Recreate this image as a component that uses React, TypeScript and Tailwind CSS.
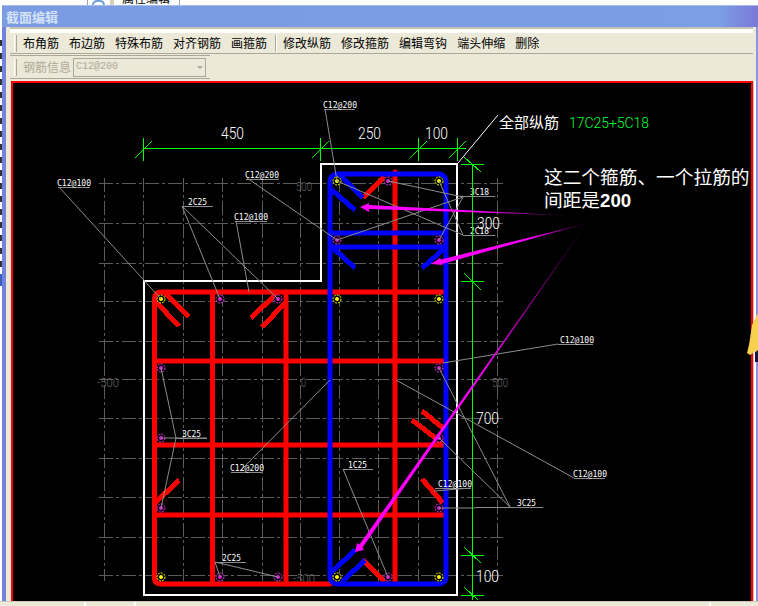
import React from "react";

const cad = "'Liberation Sans', 'Noto Sans CJK SC', sans-serif";

const toolsA = ["布角筋", "布边筋", "特殊布筋", "对齐钢筋", "画箍筋"];
const toolsB = ["修改纵筋", "修改箍筋", "编辑弯钩", "端头伸缩", "删除"];

const gridX = [104.5, 143.5, 183, 222, 262, 300.5, 339, 378, 418, 457, 497];
const gridY = [183, 223, 263, 301, 341, 379, 418, 458, 497, 537, 575];

const yellowBars = [[161, 299], [337, 181], [439, 181], [337, 299], [439, 299], [161, 577], [337, 577], [439, 577]];
const pinkBars = [
  [220, 299], [278, 299], [388, 181], [337, 240], [439, 240], [161, 368], [161, 438], [161, 508],
  [439, 368], [439, 438], [439, 508], [220, 577], [388, 577], [278, 577],
];

// red hooks and blue hooks as x1 y1 x2 y2
const redHooks = [
  [165, 293, 189, 317], [155, 301, 179, 326], [277, 293, 251, 318], [286, 302, 262, 327],
  [153, 505, 179, 480], [443, 428, 422, 411], [442, 443, 412, 420], [443, 503, 422, 479],
  [384, 177, 363, 198], [363, 560, 385, 582],
];
const blueHooks = [
  [340, 175, 363, 198], [332, 190, 355, 210], [333, 248, 355, 268], [445, 248, 422, 268],
  [332, 572, 355, 550], [342, 582, 365, 560],
];

const leaders = [
  [59, 187, 161, 299], [182, 206, 220, 299], [182, 206, 278, 299], [236, 221, 249, 292],
  [247, 178, 337, 240], [325, 109, 337, 181], [388, 181, 463, 197], [337, 240, 463, 197],
  [337, 181, 463, 235], [439, 181, 463, 235], [439, 240, 463, 197], [558, 344, 443, 363],
  [510, 507, 439, 368], [510, 507, 439, 438], [439, 508, 475, 508], [574, 478, 396, 380],
  [434, 491, 471, 488], [343, 469, 388, 577], [240, 471, 330, 380], [176, 438, 161, 368],
  [176, 438, 161, 508], [161, 438, 207, 438], [215, 562, 220, 577], [215, 562, 278, 577],
];

// label text, text x, text baseline, underline x1, underline x2
const labels: [string, number, number, number, number][] = [
  ["C12@100", 57, 186, 58, 90],
  ["2C25", 188, 205, 182, 213],
  ["C12@100", 234, 220, 235, 267],
  ["C12@200", 245, 178, 246, 279],
  ["C12@200", 323, 108, 324, 355],
  ["3C18", 470, 195, 461, 495],
  ["2C18", 470, 234, 463, 495],
  ["C12@100", 560, 343, 558, 593],
  ["3C25", 517, 506, 475, 543],
  ["C12@100", 573, 477, 574, 605],
  ["C12@100", 438, 487, 435, 471],
  ["1C25", 348, 468, 343, 373],
  ["C12@200", 230, 471, 231, 262],
  ["3C25", 182, 437, 176, 207],
  ["2C25", 222, 561, 215, 246],
];

const dims: [string, number, number][] = [
  ["450", 221, 139], ["250", 358, 139], ["100", 425, 139], ["300", 477, 229], ["700", 476, 424], ["100", 476, 582],
];
const axis: [string, number, number, number][] = [
  ["500", 296, 191, 16], ["-500", 97, 387, 22], ["0", 301, 387, 5], ["500", 492, 387, 16], ["-500", 293, 583, 22],
];

const Grip = () => <div className="w-[3px] h-[17px] border-l border-l-white border-r border-r-[#aca899] bg-[#ece9d8]" />;

const Tool = ({ label }: { label: string }) => <span className="text-[12px] leading-none text-black">{label}</span>;

const Drawing = () => (
  <svg viewBox="13 83 738 518" className="block w-[738px] h-[518px]" style={{ fontFamily: cad }}>
    <defs>
      <linearGradient id="a1" gradientUnits="userSpaceOnUse" x1="370" y1="207" x2="568" y2="216">
        <stop offset="0.55" stopColor="#ff00ff" />
        <stop offset="1" stopColor="#200020" />
      </linearGradient>
      <linearGradient id="a2" gradientUnits="userSpaceOnUse" x1="440" y1="262" x2="588" y2="223">
        <stop offset="0.6" stopColor="#ff00ff" />
        <stop offset="1" stopColor="#300030" />
      </linearGradient>
      <linearGradient id="a3" gradientUnits="userSpaceOnUse" x1="360" y1="546" x2="587" y2="223">
        <stop offset="0.5" stopColor="#ff00ff" />
        <stop offset="1" stopColor="#500050" />
      </linearGradient>
    </defs>
    <g shapeRendering="crispEdges">
      {gridX.map((x) => (
        <line key={x} x1={x} y1="178" x2={x} y2="581" stroke="#5c5c5c" strokeDasharray="14 3 3 3" />
      ))}
      {gridY.map((y) => (
        <line key={y} x1="99" y1={y} x2="503" y2={y} stroke="#5c5c5c" strokeDasharray="14 3 3 3" />
      ))}
    </g>
    {axis.map(([t, x, y, w]) => (
      <text key={t + x} x={x} y={y} fontSize="12" fill="#666" textLength={w} lengthAdjust="spacingAndGlyphs" style={{ fontFamily: "Roboto, sans-serif", fontWeight: 300 }}>{t}</text>
    ))}

    <path d="M320.5 164H457V595H143.5V281H320.5Z" fill="none" stroke="#fff" strokeWidth="2" shapeRendering="crispEdges" />

    <g stroke="#ff0000" strokeWidth="5" fill="none" strokeLinecap="round">
      <path d="M154.5 578V299Q154.5 292 161 292H443" />
      <path d="M154.5 578Q154.5 584 161 584H330" />
      <path d="M212.5 292V584M286 292V584M395 172V582" />
      <path d="M157 361H443M157 445H443M157 515H443" />
    </g>
    <g stroke="#ff0000" strokeWidth="5" shapeRendering="crispEdges">
      {redHooks.map(([a, b, c, d], i) => (
        <line key={i} x1={a} y1={b} x2={c} y2={d} />
      ))}
    </g>
    <g stroke="#0000ff" strokeWidth="5" fill="none">
      <rect x="330" y="174" width="116" height="410" rx="7" />
      <path d="M330 233H446M330 247H446" />
      {blueHooks.map(([a, b, c, d], i) => (
        <line key={i} x1={a} y1={b} x2={c} y2={d} shapeRendering="crispEdges" />
      ))}
    </g>

    {yellowBars.map(([x, y]) => (
      <g key={`${x}-${y}`}>
        <circle cx={x} cy={y} r="4" fill="#000" stroke="#ffff00" strokeDasharray="2 1" />
        <circle cx={x} cy={y} r="2" fill="#ffff00" />
      </g>
    ))}
    {pinkBars.map(([x, y]) => (
      <g key={`${x}-${y}`}>
        <circle cx={x} cy={y} r="4" fill="#000" stroke="#f030f0" strokeDasharray="2 1" />
        <circle cx={x} cy={y} r="2" fill="#d028d0" />
      </g>
    ))}

    <g stroke="#8c8c8c" strokeWidth="1">
      {leaders.map(([a, b, c, d], i) => (
        <line key={i} x1={a} y1={b} x2={c} y2={d} />
      ))}
      {labels.map(([t, , y, a, b]) => (
        <line key={t + a} x1={a} y1={y + 1.5} x2={b} y2={y + 1.5} shapeRendering="crispEdges" />
      ))}
    </g>
    {labels.map(([t, x, y]) => (
      <text key={t + x} x={x} y={y} fontSize="9.5" fill="#fff" textLength={t.length > 4 ? 34 : 19} lengthAdjust="spacingAndGlyphs" style={{ fontFamily: "'DejaVu Sans Mono', monospace" }}>{t}</text>
    ))}

    {/* size lines */}
    <g stroke="#00ff00" shapeRendering="crispEdges" fill="none">
      <path d="M143.5 148.5H466M143.5 138V161M320.5 138V161M418.5 138V161M457.5 138V161" />
      <path d="M135 158L152 141M312 158L329 141M410 158L427 141M449 158L466 141" />
      <path d="M472.5 164V600M461 164.5H484M461 281.5H484M461 555.5H484M461 595.5H484" />
      <path d="M464 157L481 172M464 273L481 290M464 547L481 563M464 587L478 600" />
    </g>
    {dims.map(([t, x, y]) => (
      <text key={t + x} x={x} y={y} fontSize="17" fill="#fff" textLength={23} lengthAdjust="spacingAndGlyphs" style={{ fontFamily: "Roboto, sans-serif", fontWeight: 300 }}>{t}</text>
    ))}

    <line x1="458" y1="163" x2="498" y2="115" stroke="#fff" />
    <text x="499" y="128" fontSize="15" fill="#fff">全部纵筋</text>
    <text x="569" y="128" fontSize="15" fill="#00ff33" textLength={80} lengthAdjust="spacingAndGlyphs" style={{ fontFamily: "Roboto, sans-serif", fontWeight: 300 }}>17C25+5C18</text>
    <text x="544" y="184" fontSize="18.7" fill="#fff">这二个箍筋、一个拉筋的</text>
    <text x="544" y="207" fontSize="18.7" fill="#fff">
      间距是<tspan fontWeight="700">200</tspan>
    </text>

    <polygon points="360,207 369,203 369,205 568,215.5 369,209 369,212" fill="url(#a1)" />
    <polygon points="431,264 440,258 441,259.5 588,223 442,264 443,265" fill="url(#a2)" />
    <polygon points="355,552 357,543 359.5,544.5 587,223 362.5,547.5 364,550" fill="url(#a3)" />
  </svg>
);

export default function App() {
  return (
    <div className="relative flex h-[606px] w-[758px] flex-col overflow-hidden bg-white" style={{ fontFamily: "'Noto Sans CJK SC', sans-serif" }}>
      {/* what shows of the main program above the dialog */}
      <div className="flex h-[5px] shrink-0 items-end overflow-hidden pl-[87px]">
        <div className="flex h-[5px] w-[93px] items-end border-x border-[#9aa6b8]">
          <div className="ml-[4px] h-[5px] w-[13px] rounded-t-full border-2 border-b-0 border-[#6f9fd8]" />
          <div className="ml-[5px] h-[5px] w-[4px] bg-[#d8d0b8]" />
          <span className="ml-[8px] shrink-0 text-[12px] leading-[14px] text-black">属性编辑</span>
        </div>
      </div>

      <div className="flex min-h-0 flex-1">
        <div className="flex w-[2px] shrink-0 flex-col gap-[7px] pt-[35px]">
          {Array.from({ length: 18 }).map((_, i) => (
            <div key={i} className="h-[6px] shrink-0 bg-[#333]" />
          ))}
          <div className="h-[12px] shrink-0 bg-[#3a5fc0]" />
        </div>

        <div className="flex min-w-0 flex-1 flex-col">
          <div className="flex h-[22px] shrink-0 items-center bg-[linear-gradient(90deg,#7b9be2_0%,#7b9ee4_95%,#7a78d8_100%)] pl-[4px] border-t border-[#a8bcec]">
            <span className="text-[13px] font-bold leading-none text-[#d4e2f8]">截面编辑</span>
          </div>

          <div className="flex min-h-0 flex-1">
            <div className="w-[4px] shrink-0 bg-[#7383dc]" />
            <div className="flex min-w-0 flex-1 flex-col bg-[#ece9d8]">
              <div className="ml-[4px] mr-[3px] h-[6px] shrink-0 border-t-2 border-[#c4c2b4] bg-white" />
              <div className="ml-[4px] mr-[3px] flex h-[21px] shrink-0 items-center border-b border-[#aca899]">
                <div className="ml-[4px]"><Grip /></div>
                <div className="ml-[6px] flex items-center gap-[10px]">
                  {toolsA.map((t) => <Tool key={t} label={t} />)}
                </div>
                <div className="ml-[8px] h-[17px] w-[2px] border-l border-l-[#aca899] border-r border-r-white" />
                <div className="ml-[6px] flex items-center gap-[10px]">
                  {toolsB.map((t) => <Tool key={t} label={t} />)}
                </div>
              </div>
              <div className="ml-[4px] mt-px flex h-[24px] w-[200px] shrink-0 items-center border-y border-[#aca899]">
                <div className="ml-[4px]"><Grip /></div>
                <span className="ml-[6px] text-[12px] leading-none text-[#aca899]">钢筋信息</span>
                <div className="ml-[2px] flex h-[19px] w-[133px] items-center justify-between border border-[#aca899] pl-[2px] pr-[2px]">
                  <span className="text-[10px] leading-none text-[#aca899]" style={{ fontFamily: "'Liberation Mono', monospace" }}>C12@200</span>
                  <span className="h-0 w-0 border-x-[3px] border-t-[3px] border-x-transparent border-t-[#aca899]" />
                </div>
              </div>
              <div className="mt-[2px] flex min-h-0 flex-1 pl-[5px]">
                <div className="min-w-0 flex-1 overflow-hidden border-x-2 border-t-2 border-[#ff0000] bg-black">
                  <Drawing />
                </div>
                <div className="flex w-[3px] shrink-0">
                  <div className="w-[1px] bg-[#c4c4c4]" />
                  <div className="w-[2px] bg-white" />
                </div>
              </div>
            </div>
            <div className="w-[2px] shrink-0 bg-[#8a96dc]" />
          </div>
        </div>
      </div>

      <div className="flex h-[5px] shrink-0 border-t border-[#c8c6b4] bg-[#ece9d8]">
        <div className="w-[86px] border-r-2 border-white" />
        <div className="w-[50px] border-r-2 border-white" />
        <div className="w-[575px] border-r-2 border-white" />
      </div>

      {/* corner of a yellow figure lying over the dialog edge */}
      <svg className="absolute left-[745px] top-[310px] h-[55px] w-[13px]" viewBox="745 310 13 55">
        <polygon points="758,350 755,352 755,362 758,362" fill="#1a1838" />
        <polygon points="758,313 752,325 749,345 747,353 750,355 758,350" fill="#f8d050" />
      </svg>
    </div>
  );
}
